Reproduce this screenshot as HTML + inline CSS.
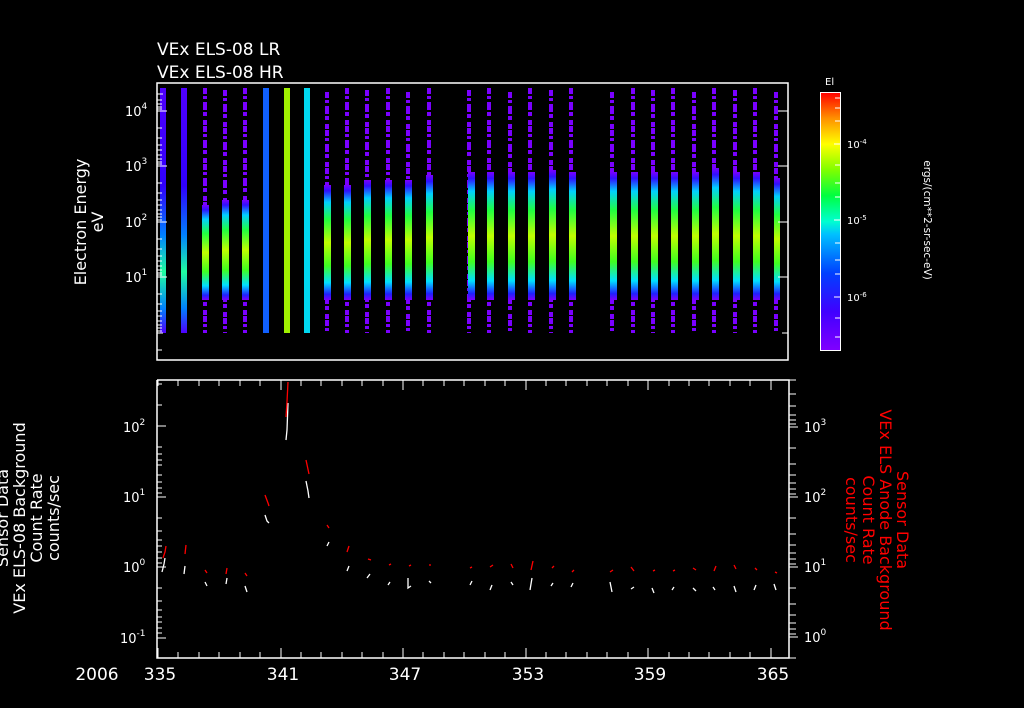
<!DOCTYPE html>
<html><head><meta charset="utf-8"><style>
html,body{margin:0;padding:0;background:#000;width:1024px;height:708px;overflow:hidden}
svg{display:block}
text{font-family:"DejaVu Sans","Liberation Sans",sans-serif;fill:#fff}
</style></head><body>
<svg width="1024" height="708" viewBox="0 0 1024 708" xmlns="http://www.w3.org/2000/svg">
<defs>
<linearGradient id="cb" x1="0" y1="1" x2="0" y2="0">
<stop offset="0" stop-color="#8000ff"/><stop offset="0.15" stop-color="#4000ff"/><stop offset="0.3" stop-color="#0040ff"/>
<stop offset="0.45" stop-color="#00c0ff"/><stop offset="0.5" stop-color="#00ffd0"/><stop offset="0.6" stop-color="#00ff40"/>
<stop offset="0.7" stop-color="#80ff00"/><stop offset="0.8" stop-color="#ffff00"/><stop offset="0.9" stop-color="#ff9000"/><stop offset="1" stop-color="#ff0000"/>
</linearGradient>
<linearGradient id="bar" x1="0" y1="0" x2="0" y2="1">
<stop offset="0" stop-color="#7a00ff"/><stop offset="0.05" stop-color="#3010ff"/><stop offset="0.15" stop-color="#00d0ff"/>
<stop offset="0.3" stop-color="#20ff40"/><stop offset="0.5" stop-color="#c0ff00"/><stop offset="0.7" stop-color="#40ff20"/>
<stop offset="0.85" stop-color="#00e0ff"/><stop offset="0.95" stop-color="#2020ff"/><stop offset="1" stop-color="#7a00ff"/>
</linearGradient>
<linearGradient id="bar2" x1="0" y1="0" x2="0" y2="1">
<stop offset="0" stop-color="#5000ff"/><stop offset="0.4" stop-color="#3000ff"/><stop offset="0.6" stop-color="#0080ff"/>
<stop offset="0.75" stop-color="#20ffa0"/><stop offset="0.9" stop-color="#0080ff"/><stop offset="1" stop-color="#5000ff"/>
</linearGradient>
</defs>

<text x="157" y="55" font-size="17">VEx ELS-08 LR</text>
<text x="157" y="78" font-size="17">VEx ELS-08 HR</text>

<g>
<rect x="160" y="88" width="6" height="245" fill="url(#bar2)"/>
<rect x="181" y="88" width="6" height="245" fill="url(#bar2)"/>
<rect x="263" y="88" width="6" height="245" fill="#1060ff"/>
<rect x="284" y="88" width="6" height="245" fill="#a0f000"/>
<rect x="304" y="88" width="6" height="245" fill="#00d8f0"/>
<g stroke="#7a00ff" stroke-width="4" stroke-dasharray="6 2 3 3 8 2 4 4 5 1" fill="none">
<path d="M205 88V333M225 90V333M245 88V333M327 92V333M347 88V333M367 90V333M388 88V333M408 92V333M429 88V333M469 90V333M489 88V333M510 92V333M530 88V333M551 90V333M571 88V333M612 92V333M633 88V333M653 90V333M673 88V333M694 92V333M714 88V333M735 90V333M755 88V333M776 92V333"/>
</g>
<g fill="url(#bar)">
<rect x="202" y="205" width="7" height="95"/><rect x="222" y="200" width="7" height="100"/><rect x="242" y="200" width="7" height="100"/>
<rect x="324" y="185" width="7" height="115"/><rect x="344" y="185" width="7" height="115"/><rect x="364" y="180" width="7" height="120"/>
<rect x="385" y="180" width="7" height="120"/><rect x="405" y="180" width="7" height="120"/><rect x="426" y="175" width="7" height="125"/>
<rect x="468" y="172" width="7" height="128"/><rect x="487" y="172" width="7" height="128"/><rect x="508" y="172" width="7" height="128"/>
<rect x="528" y="172" width="7" height="128"/><rect x="549" y="170" width="7" height="130"/><rect x="569" y="172" width="7" height="128"/>
<rect x="610" y="172" width="7" height="128"/><rect x="631" y="172" width="7" height="128"/><rect x="651" y="172" width="7" height="128"/>
<rect x="671" y="172" width="7" height="128"/><rect x="692" y="172" width="7" height="128"/><rect x="712" y="168" width="7" height="132"/>
<rect x="733" y="172" width="7" height="128"/><rect x="753" y="172" width="7" height="128"/><rect x="774" y="178" width="6" height="122"/>
</g>
</g>

<g stroke="#fff" stroke-width="1.5" fill="none">
<rect x="157" y="83" width="631" height="277"/>
</g>
<g stroke="#fff" stroke-width="1">
<path d="M157 111h10M157 166h10M157 222h10M157 277h10M157 333h6M157 94h6M157 100h5M157 104h5M157 107h5M157 109h5M157 128h5M157 138h5M157 145h5M157 150h5M157 155h5M157 159h5M157 162h5M157 164h5M157 183h5M157 193h5M157 200h5M157 205h5M157 210h5M157 214h5M157 217h5M157 220h5M157 239h5M157 249h5M157 256h5M157 261h5M157 266h5M157 270h5M157 273h5M157 275h5M157 294h5M157 304h5M157 311h5M157 316h5M157 321h5M157 325h5M157 328h5M157 331h5M157 350h5"/>
<path d="M788 111h-10M788 166h-10M788 222h-10M788 277h-10M788 333h-6"/>
</g>
<g font-size="13">
<text x="125" y="116">10<tspan font-size="9" dy="-7">4</tspan></text>
<text x="125" y="171">10<tspan font-size="9" dy="-7">3</tspan></text>
<text x="125" y="227">10<tspan font-size="9" dy="-7">2</tspan></text>
<text x="125" y="282">10<tspan font-size="9" dy="-7">1</tspan></text>
</g>
<text transform="translate(86,222) rotate(-90)" text-anchor="middle" font-size="16">Electron Energy</text>
<text transform="translate(103,222) rotate(-90)" text-anchor="middle" font-size="16">eV</text>

<rect x="820.5" y="92.5" width="20" height="258" fill="url(#cb)" stroke="#fff"/>
<g stroke="#fff"><path d="M840 98h-5M840 108h-5M840 121h-5M840 144h-6M840 165h-5M840 183h-5M840 197h-5M840 220h-6M840 243h-5M840 260h-5M840 274h-5M840 297h-6M840 318h-5M840 337h-5"/></g>
<text x="825" y="85" font-size="10">El</text>
<g font-size="10"><text x="847" y="148">10<tspan font-size="7" dy="-4">-4</tspan></text>
<text x="847" y="224">10<tspan font-size="7" dy="-4">-5</tspan></text>
<text x="847" y="301">10<tspan font-size="7" dy="-4">-6</tspan></text></g>
<text transform="translate(924,220) rotate(90)" text-anchor="middle" font-size="10.5">ergs/(cm**2-sr-sec-eV)</text>

<g stroke="#fff" stroke-width="1.5" fill="none">
<path d="M157 380V658H789V380H157"/>
</g>
<g stroke="#fff" stroke-width="1">
<path d="M157 426h9M157 497h9M157 567h9M157 638h9M157 384h5M157 405h5M157 447h5M157 454h5M157 460h5M157 465h5M157 475h5M157 482h5M157 488h5M157 493h5M157 518h5M157 531h5M157 540h5M157 546h5M157 552h5M157 558h5M157 563h5M157 588h5M157 601h5M157 610h5M157 617h5M157 622h5M157 628h5M157 633h5"/>
<path d="M789 427h9M789 497h9M789 567h9M789 637h9M789 380h7M789 394h7M789 406h7M789 415h7M789 420h7M789 424h7M789 448h7M789 464h7M789 475h7M789 483h7M789 489h7M789 494h7M789 518h7M789 534h7M789 545h7M789 553h7M789 559h7M789 564h7M789 588h7M789 604h7M789 615h7M789 623h7M789 629h7M789 634h7M789 658h7"/>
<path d="M158 658v-10M281 658v-10M403 658v-10M526 658v-10M648 658v-10M771 658v-10M178 658v-6M199 658v-6M219 658v-6M240 658v-6M260 658v-6M301 658v-6M321 658v-6M342 658v-6M362 658v-6M383 658v-6M423 658v-6M444 658v-6M464 658v-6M485 658v-6M505 658v-6M546 658v-6M566 658v-6M587 658v-6M607 658v-6M628 658v-6M669 658v-6M689 658v-6M709 658v-6M730 658v-6M750 658v-6"/>
<path d="M158 380v6M281 380v10M403 380v10M526 380v10M648 380v10M771 380v10M178 380v6M199 380v6M219 380v6M240 380v6M260 380v6M301 380v6M321 380v6M342 380v6M362 380v6M383 380v6M423 380v6M444 380v6M464 380v6M485 380v6M505 380v6M546 380v6M566 380v6M587 380v6M607 380v6M628 380v6M669 380v6M689 380v6M709 380v6M730 380v6M750 380v6"/>
</g>
<g font-size="13">
<text x="123" y="432">10<tspan font-size="9" dy="-7">2</tspan></text>
<text x="123" y="502">10<tspan font-size="9" dy="-7">1</tspan></text>
<text x="123" y="572">10<tspan font-size="9" dy="-7">0</tspan></text>
<text x="120" y="643">10<tspan font-size="9" dy="-7">-1</tspan></text>
<text x="804" y="432">10<tspan font-size="9" dy="-7">3</tspan></text>
<text x="804" y="502">10<tspan font-size="9" dy="-7">2</tspan></text>
<text x="804" y="572">10<tspan font-size="9" dy="-7">1</tspan></text>
<text x="804" y="642">10<tspan font-size="9" dy="-7">0</tspan></text>
</g>
<g font-size="17" text-anchor="middle">
<text x="97" y="680">2006</text>
<text x="160" y="680">335</text><text x="283" y="680">341</text><text x="405" y="680">347</text>
<text x="528" y="680">353</text><text x="650" y="680">359</text><text x="773" y="680">365</text>
</g>

<g font-size="16" text-anchor="middle">
<text transform="translate(8,518) rotate(-90)">Sensor Data</text>
<text transform="translate(25,518) rotate(-90)">VEx ELS-08 Background</text>
<text transform="translate(42,518) rotate(-90)">Count Rate</text>
<text transform="translate(59,518) rotate(-90)">counts/sec</text>
</g>
<g font-size="16" text-anchor="middle">
<text style="fill:#f00" transform="translate(897,520) rotate(90)">Sensor Data</text>
<text style="fill:#f00" transform="translate(880,520) rotate(90)">VEx ELS Anode Background</text>
<text style="fill:#f00" transform="translate(863,520) rotate(90)">Count Rate</text>
<text style="fill:#f00" transform="translate(846,520) rotate(90)">counts/sec</text>
</g>

<g stroke="#fff" stroke-width="1.3" fill="none">
<path d="M162 572l2-8 1-6M184 574l1-8M205 582l2 4M226 584l1-6M245 586l2 6M265 515l2 6 2 2M286 440l1-10 1-27M306 481l2 10 1 7M327 546l2-4M347 571l2-5M367 578l3-4M388 585l2-3M408 578l0 10 3-2M429 581l2 2"/>
<path d="M470 585l2-4M490 590l2-5M511 582l2 3M530 590l2-12M551 586l2-3M571 587l2-4M610 582l2 10M631 589l3-2M652 588l2 5M672 590l2-3M693 588l3 3M713 587l2 3M734 586l2 6M754 590l2-5M774 584l2 6"/>
</g>
<g stroke="#f00" stroke-width="1.3" fill="none">
<path d="M163 558l2-6 1-6M185 554l1-9M205 570l2 3M226 574l1-6M245 573l2 3M265 495l3 8 1 3M288 382l-1 20-1 15M306 460l3 14M327 525l2 3M347 552l2-6M368 559l3 1M389 565l2-1M409 566l2-1M429 565l2 0"/>
<path d="M470 568l2-1M490 567l3-2M511 564l2 4M531 570l2-9M552 568l2-2M572 572l2-2M610 572l3-2M631 567l3 4M653 571l2-1M673 571l2-1M693 568l3 2M714 571l2-5M734 565l2 4M755 568l2 2M775 572l2 1"/>
</g>
</svg>
</body></html>
